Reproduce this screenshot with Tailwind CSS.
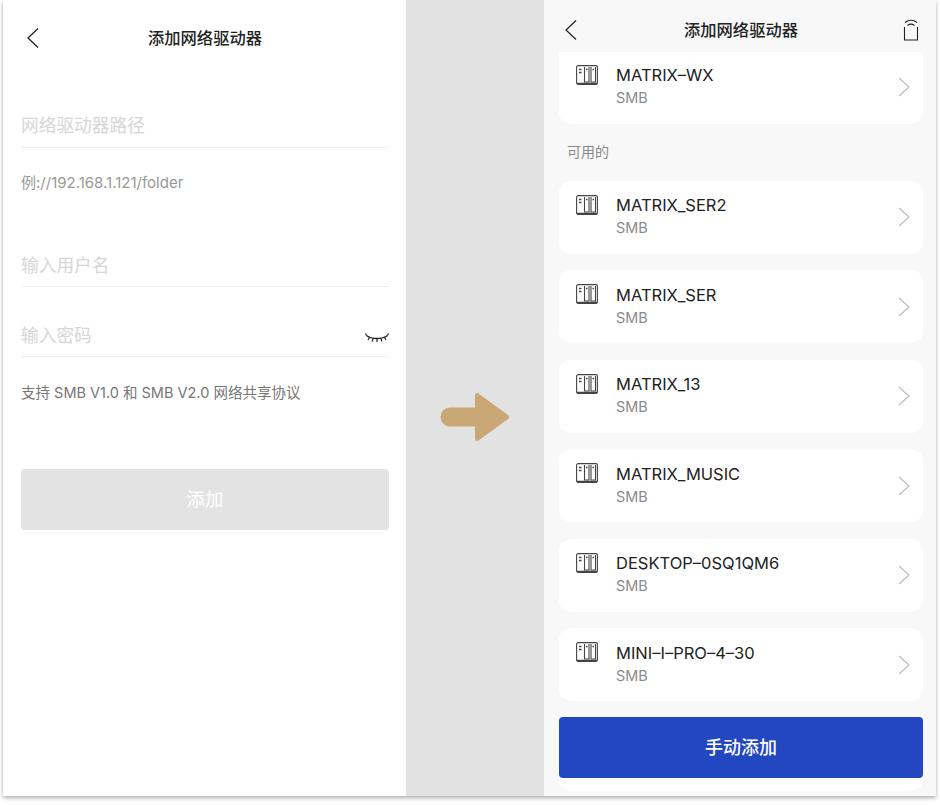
<!DOCTYPE html>
<html lang="zh-CN">

<head>
    <meta charset="UTF-8">
    <meta name="viewport" content="width=device-width, initial-scale=1.0">
    <title>添加网络驱动器</title>
    <script src="https://cdn.jsdelivr.net/npm/@tailwindcss/browser@4"></script>
</head>

<body class="min-h-[805px] bg-white font-['Inter','Noto_Sans_CJK_SC',sans-serif]">
    <div class="ml-[3px] flex h-[796px] w-[933px] overflow-hidden shadow-[0_2px_4px_rgba(0,0,0,0.32)]">

        <!-- left phone -->
        <section class="w-[403px] shrink-0 bg-white pl-[18px] pr-[17px]">
            <header class="relative flex h-[76px] items-center justify-center">
                <svg class="absolute left-[5px] top-[27px] h-[22px] w-[14px]" viewBox="0 0 14 22" fill="none" stroke="#222" stroke-width="1.3">
                    <path d="M12 1.500 2 11l10 9.500" />
                </svg>
                <h1 class="mt-[1px] text-[16.300px] font-medium text-[#222]">添加网络驱动器</h1>
            </header>
            <div class="mt-[33px] flex h-[39px] items-start border-b border-[#eeeeee] text-[17.700px] leading-[33px] text-[#d6d6d6]">网络驱动器路径</div>
            <p class="mt-[25px] text-[15px] leading-5 text-[#999999]">例://192.168.1.121/folder</p>
            <div class="mt-[55px] flex h-[39px] items-start border-b border-[#eeeeee] text-[17.700px] leading-[35px] text-[#d6d6d6]">输入用户名</div>
            <div class="mt-[31px] flex h-[39px] items-start justify-between border-b border-[#eeeeee] text-[17.700px] leading-[35px] text-[#d6d6d6]">
                <span>输入密码</span>
                <svg class="mt-[14px] h-[14px] w-[24px]" viewBox="0 0 24 14" fill="none" stroke="#222" stroke-width="1.200">
                    <path d="M1.500 3.500C7 7.500 17 7.500 22.500 3.500" stroke-width="1.500" />
                    <path d="M1.500 3.500 0.500 1.500M4.500 5.500 3 8M8 6.500 7.200 9.500M12 7 12 10M16 6.500 16.800 9.500M19.500 5.500 21 8M22.500 3.500 23.500 1.500" />
                </svg>
            </div>
            <p class="mt-[26px] text-[14.500px] leading-5 text-[#777777]">支持 SMB V1.0 和 SMB V2.0 网络共享协议</p>
            <button class="mt-[66px] h-[61px] w-full rounded-[4px] bg-[#e3e3e3] text-[18.500px] text-white">添加</button>
        </section>

        <!-- arrow gap -->
        <div class="flex w-[138px] shrink-0 items-center justify-center bg-[#e2e2e2]">
            <svg class="mt-[38px] h-[50px] w-[70px]" viewBox="0 0 70 50">
                <path d="M10 15.500h26v19H10a9.500 9.500 0 0 1 0-19Z" fill="#c9a875" />
                <path d="M35 3.500c0-2 2-3 3.500-2l29.500 21.500c1.500 1 1.500 3 0 4L38.500 48.500c-1.500 1-3.500 0-3.500-2Z" fill="#c9a875" />
            </svg>
        </div>

        <!-- right phone -->
        <section class="relative w-[392px] shrink-0 overflow-hidden bg-[#f8f8f8] pl-[15px] pr-[13px]">
            <header class="relative flex h-[52px] items-center justify-center pt-[8px]">
                <svg class="absolute left-[5px] top-[19px] h-[22px] w-[14px]" viewBox="0 0 14 22" fill="none" stroke="#222" stroke-width="1.200">
                    <path d="M12 1.500 2 11l10 9.500" />
                </svg>
                <h1 class="text-[16.300px] font-medium text-[#222]">添加网络驱动器</h1>
                <svg class="absolute right-[4px] top-[18px] h-[24px] w-[16px]" viewBox="0 0 16 24" fill="none" stroke="#222" stroke-width="1.100">
                    <path d="M1.500 9v13h13V9M2 4.500C5.500 1.500 10.500 1.500 14 4.500M4.500 7.500c2-1.500 5-1.500 7 0" />
                </svg>
            </header>

            <div class="flex h-[72px] items-start rounded-b-xl bg-white pl-[17px] pr-[13px]">
                <svg class="mt-[13px] h-[20px] w-[22px] shrink-0" viewBox="0 0 22 20" fill="none" stroke="#444" stroke-width="1.100">
                    <rect x="0.600" y="0.600" width="20.800" height="18.800" rx="1.500" />
                    <path d="M8.500 2v15h4.500V2M15 2v15h4.500V2" />
                    <path d="M1 18.500h20" stroke-width="1.500" />
                    <path d="M3 4.500h2.500M3 7.500h2.500M10 4.500h1.500M16.500 4.500h1.500" stroke-width="1.500" />
                </svg>
                <div class="ml-[18px] flex-1 pt-[12px]">
                    <p class="text-[16.500px] leading-[22px] text-[#222]">MATRIX–WX</p>
                    <p class="mt-[2px] text-[14.400px] leading-[20px] text-[#8a8a8a]">SMB</p>
                </div>
                <svg class="mt-[25px] h-[20px] w-[12px]" viewBox="0 0 12 20" fill="none" stroke="#bdbdbd" stroke-width="1.200">
                    <path d="M1 1l10 9-10 9" />
                </svg>
            </div>

            <p class="ml-[8px] mt-[19px] h-[37.520px] text-[14px] leading-[18px] text-[#8a8a8a]">可用的</p>

            <div class="flex flex-col gap-[16.600px]">
                <div class="flex h-[73px] items-start rounded-xl bg-white pl-[17px] pr-[13px]">
                    <svg class="mt-[14px] h-[20px] w-[22px] shrink-0" viewBox="0 0 22 20" fill="none" stroke="#444" stroke-width="1.100">
                        <rect x="0.600" y="0.600" width="20.800" height="18.800" rx="1.500" />
                        <path d="M8.500 2v15h4.500V2M15 2v15h4.500V2" />
                        <path d="M1 18.500h20" stroke-width="1.500" />
                        <path d="M3 4.500h2.500M3 7.500h2.500M10 4.500h1.500M16.500 4.500h1.500" stroke-width="1.500" />
                    </svg>
                    <div class="ml-[18px] flex-1 pt-[13.500px]">
                        <p class="text-[16.500px] leading-[22px] text-[#222]">MATRIX_SER2</p>
                        <p class="mt-[2px] text-[14.400px] leading-[20px] text-[#8a8a8a]">SMB</p>
                    </div>
                    <svg class="mt-[26.400px] h-[20px] w-[12px]" viewBox="0 0 12 20" fill="none" stroke="#bdbdbd" stroke-width="1.200">
                        <path d="M1 1l10 9-10 9" />
                    </svg>
                </div>
                <div class="flex h-[73px] items-start rounded-xl bg-white pl-[17px] pr-[13px]">
                    <svg class="mt-[14px] h-[20px] w-[22px] shrink-0" viewBox="0 0 22 20" fill="none" stroke="#444" stroke-width="1.100">
                        <rect x="0.600" y="0.600" width="20.800" height="18.800" rx="1.500" />
                        <path d="M8.500 2v15h4.500V2M15 2v15h4.500V2" />
                        <path d="M1 18.500h20" stroke-width="1.500" />
                        <path d="M3 4.500h2.500M3 7.500h2.500M10 4.500h1.500M16.500 4.500h1.500" stroke-width="1.500" />
                    </svg>
                    <div class="ml-[18px] flex-1 pt-[13.500px]">
                        <p class="text-[16.500px] leading-[22px] text-[#222]">MATRIX_SER</p>
                        <p class="mt-[2px] text-[14.400px] leading-[20px] text-[#8a8a8a]">SMB</p>
                    </div>
                    <svg class="mt-[26.400px] h-[20px] w-[12px]" viewBox="0 0 12 20" fill="none" stroke="#bdbdbd" stroke-width="1.200">
                        <path d="M1 1l10 9-10 9" />
                    </svg>
                </div>
                <div class="flex h-[73px] items-start rounded-xl bg-white pl-[17px] pr-[13px]">
                    <svg class="mt-[14px] h-[20px] w-[22px] shrink-0" viewBox="0 0 22 20" fill="none" stroke="#444" stroke-width="1.100">
                        <rect x="0.600" y="0.600" width="20.800" height="18.800" rx="1.500" />
                        <path d="M8.500 2v15h4.500V2M15 2v15h4.500V2" />
                        <path d="M1 18.500h20" stroke-width="1.500" />
                        <path d="M3 4.500h2.500M3 7.500h2.500M10 4.500h1.500M16.500 4.500h1.500" stroke-width="1.500" />
                    </svg>
                    <div class="ml-[18px] flex-1 pt-[13.500px]">
                        <p class="text-[16.500px] leading-[22px] text-[#222]">MATRIX_13</p>
                        <p class="mt-[2px] text-[14.400px] leading-[20px] text-[#8a8a8a]">SMB</p>
                    </div>
                    <svg class="mt-[26.400px] h-[20px] w-[12px]" viewBox="0 0 12 20" fill="none" stroke="#bdbdbd" stroke-width="1.200">
                        <path d="M1 1l10 9-10 9" />
                    </svg>
                </div>
                <div class="flex h-[73px] items-start rounded-xl bg-white pl-[17px] pr-[13px]">
                    <svg class="mt-[14px] h-[20px] w-[22px] shrink-0" viewBox="0 0 22 20" fill="none" stroke="#444" stroke-width="1.100">
                        <rect x="0.600" y="0.600" width="20.800" height="18.800" rx="1.500" />
                        <path d="M8.500 2v15h4.500V2M15 2v15h4.500V2" />
                        <path d="M1 18.500h20" stroke-width="1.500" />
                        <path d="M3 4.500h2.500M3 7.500h2.500M10 4.500h1.500M16.500 4.500h1.500" stroke-width="1.500" />
                    </svg>
                    <div class="ml-[18px] flex-1 pt-[13.500px]">
                        <p class="text-[16.500px] leading-[22px] text-[#222]">MATRIX_MUSIC</p>
                        <p class="mt-[2px] text-[14.400px] leading-[20px] text-[#8a8a8a]">SMB</p>
                    </div>
                    <svg class="mt-[26.400px] h-[20px] w-[12px]" viewBox="0 0 12 20" fill="none" stroke="#bdbdbd" stroke-width="1.200">
                        <path d="M1 1l10 9-10 9" />
                    </svg>
                </div>
                <div class="flex h-[73px] items-start rounded-xl bg-white pl-[17px] pr-[13px]">
                    <svg class="mt-[14px] h-[20px] w-[22px] shrink-0" viewBox="0 0 22 20" fill="none" stroke="#444" stroke-width="1.100">
                        <rect x="0.600" y="0.600" width="20.800" height="18.800" rx="1.500" />
                        <path d="M8.500 2v15h4.500V2M15 2v15h4.500V2" />
                        <path d="M1 18.500h20" stroke-width="1.500" />
                        <path d="M3 4.500h2.500M3 7.500h2.500M10 4.500h1.500M16.500 4.500h1.500" stroke-width="1.500" />
                    </svg>
                    <div class="ml-[18px] flex-1 pt-[13.500px]">
                        <p class="text-[16.500px] leading-[22px] text-[#222]">DESKTOP–0SQ1QM6</p>
                        <p class="mt-[2px] text-[14.400px] leading-[20px] text-[#8a8a8a]">SMB</p>
                    </div>
                    <svg class="mt-[26.400px] h-[20px] w-[12px]" viewBox="0 0 12 20" fill="none" stroke="#bdbdbd" stroke-width="1.200">
                        <path d="M1 1l10 9-10 9" />
                    </svg>
                </div>
                <div class="flex h-[73px] items-start rounded-xl bg-white pl-[17px] pr-[13px]">
                    <svg class="mt-[14px] h-[20px] w-[22px] shrink-0" viewBox="0 0 22 20" fill="none" stroke="#444" stroke-width="1.100">
                        <rect x="0.600" y="0.600" width="20.800" height="18.800" rx="1.500" />
                        <path d="M8.500 2v15h4.500V2M15 2v15h4.500V2" />
                        <path d="M1 18.500h20" stroke-width="1.500" />
                        <path d="M3 4.500h2.500M3 7.500h2.500M10 4.500h1.500M16.500 4.500h1.500" stroke-width="1.500" />
                    </svg>
                    <div class="ml-[18px] flex-1 pt-[13.500px]">
                        <p class="text-[16.500px] leading-[22px] text-[#222]">MINI–I–PRO–4–30</p>
                        <p class="mt-[2px] text-[14.400px] leading-[20px] text-[#8a8a8a]">SMB</p>
                    </div>
                    <svg class="mt-[26.400px] h-[20px] w-[12px]" viewBox="0 0 12 20" fill="none" stroke="#bdbdbd" stroke-width="1.200">
                        <path d="M1 1l10 9-10 9" />
                    </svg>
                </div>
                <div class="h-[73px] rounded-xl bg-white"></div>
            </div>

            <!-- sticks over the last card -->
            <button class="absolute bottom-[18px] left-[15px] right-[13px] h-[61px] rounded-[4px] bg-[#2247c0] text-[18px] font-medium text-white">手动添加</button>
        </section>
    </div>
</body>

</html>
